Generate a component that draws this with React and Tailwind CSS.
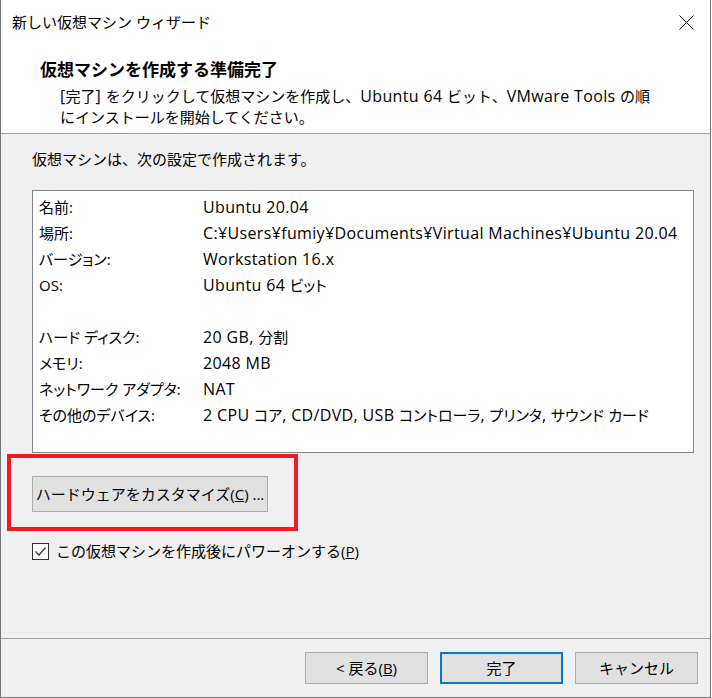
import React from 'react';

const JP = "font-['Segoe_UI','Open_Sans','Noto_Sans_CJK_JP',sans-serif]";

const ROWS = [
  ['名前:', 'Ubuntu 20.04'],
  ['場所:', 'C:¥Users¥fumiy¥Documents¥Virtual Machines¥Ubuntu 20.04'],
  ['バージョン:', 'Workstation 16.x'],
  ['OS:', 'Ubuntu 64 ビット'],
  null,
  ['ハード ディスク:', '20 GB, 分割'],
  ['メモリ:', '2048 MB'],
  ['ネットワーク アダプタ:', 'NAT'],
  ['その他のデバイス:', '2 CPU コア, CD/DVD, USB コントローラ, プリンタ, サウンド カード'],
];

// latin runs are drawn a bit larger, like Segoe UI next to Meiryo UI
const Mixed = ({ text }) =>
  text.split(/([\u3000-\u30ff\u4e00-\u9fff]+)/).map((part, i) =>
    /[\u3000-\u30ff\u4e00-\u9fff]/.test(part) ? (
      <span key={i}>{part}</span>
    ) : (
      <span key={i} className="text-[16px] tracking-[0.35px]">{part}</span>
    )
  );

const Btn = ({ children, primary }) => (
  <button
    className={`w-[123px] h-[32px] flex items-center justify-center text-[15px] text-black bg-[#e1e1e1] ${
      primary ? 'border-2 border-[#0078d7]' : 'border border-[#adadad]'
    }`}
  >
    {children}
  </button>
);

export default function App() {
  return (
    <div className={`w-[711px] h-[698px] bg-[#f0f0f0] flex flex-col border-l border-r border-b border-[#767676] text-black ${JP}`}>
      {/* title bar + header */}
      <div className="bg-white h-[134px] border-b border-[#a0a0a0] shrink-0">
        <div className="h-[44px] flex items-center justify-between pl-[11px] pr-[16px]">
          <span className="text-[15px]">新しい仮想マシン ウィザード</span>
          <svg width="15" height="15" viewBox="0 0 15 15">
            <path d="M0.5 0.5 L14.5 14.5 M14.5 0.5 L0.5 14.5" stroke="#000" strokeWidth="1" fill="none" />
          </svg>
        </div>
        <div className="pl-[39px] pt-[14px]">
          <div className="text-[17px] font-bold leading-[24px]">仮想マシンを作成する準備完了</div>
          <div className="pl-[20px] mt-[4px] text-[15px] leading-[21px] whitespace-nowrap">
            <div>
              <Mixed text="[完了] をクリックして仮想マシンを作成し、Ubuntu 64 ビット、VMware Tools の順" />
            </div>
            <div>にインストールを開始してください。</div>
          </div>
        </div>
      </div>

      {/* body */}
      <div className="flex-1 flex flex-col">
        <div className="pl-[31px] pt-[15px] text-[15px] leading-[20px]">仮想マシンは、次の設定で作成されます。</div>

        <div className="ml-[31px] mt-[21px] w-[662px] h-[263px] bg-white border border-[#828790] pt-[3px] pl-[6px] text-[15px] leading-[26px]">
          {ROWS.map((r, i) =>
            r ? (
              <div key={i} className="flex whitespace-nowrap">
                <span className="w-[164px] shrink-0 [font-feature-settings:'palt']">{r[0]}</span>
                <span className="[font-feature-settings:'palt']">
                  <Mixed text={r[1]} />
                </span>
              </div>
            ) : (
              <div key={i} className="h-[26px]" />
            )
          )}
        </div>

        <div className="ml-[6px] mt-[1px] w-[291px] h-[77px] border-4 border-[#ed1c24] pt-[18px] pl-[21px]">
          <button className="w-[236px] h-[36px] bg-[#e1e1e1] border border-[#adadad] text-[15px] flex items-center justify-center">
            ハードウェアをカスタマイズ(<span className="underline">C</span>) ...
          </button>
        </div>

        <div className="ml-[31px] mt-[10px] flex items-center gap-[7px]">
          <div className="w-[17px] h-[17px] border border-[#333] bg-white flex items-center justify-center">
            <svg width="13" height="13" viewBox="0 0 13 13">
              <path d="M1.5 6.5 L5 10 L11.5 2.5" stroke="#333" strokeWidth="1.3" fill="none" />
            </svg>
          </div>
          <span className="text-[15px] leading-[20px]">
            この仮想マシンを作成後にパワーオンする(<span className="underline">P</span>)
          </span>
        </div>

        <div className="flex-1" />
      </div>

      {/* footer */}
      <div className="h-[59px] border-t border-[#a0a0a0] shrink-0 flex justify-end items-start pt-[13px] pr-[12px] gap-[12px]">
        <Btn>&lt; 戻る(<span className="underline">B</span>)</Btn>
        <Btn primary>完了</Btn>
        <Btn>キャンセル</Btn>
      </div>
    </div>
  );
}
